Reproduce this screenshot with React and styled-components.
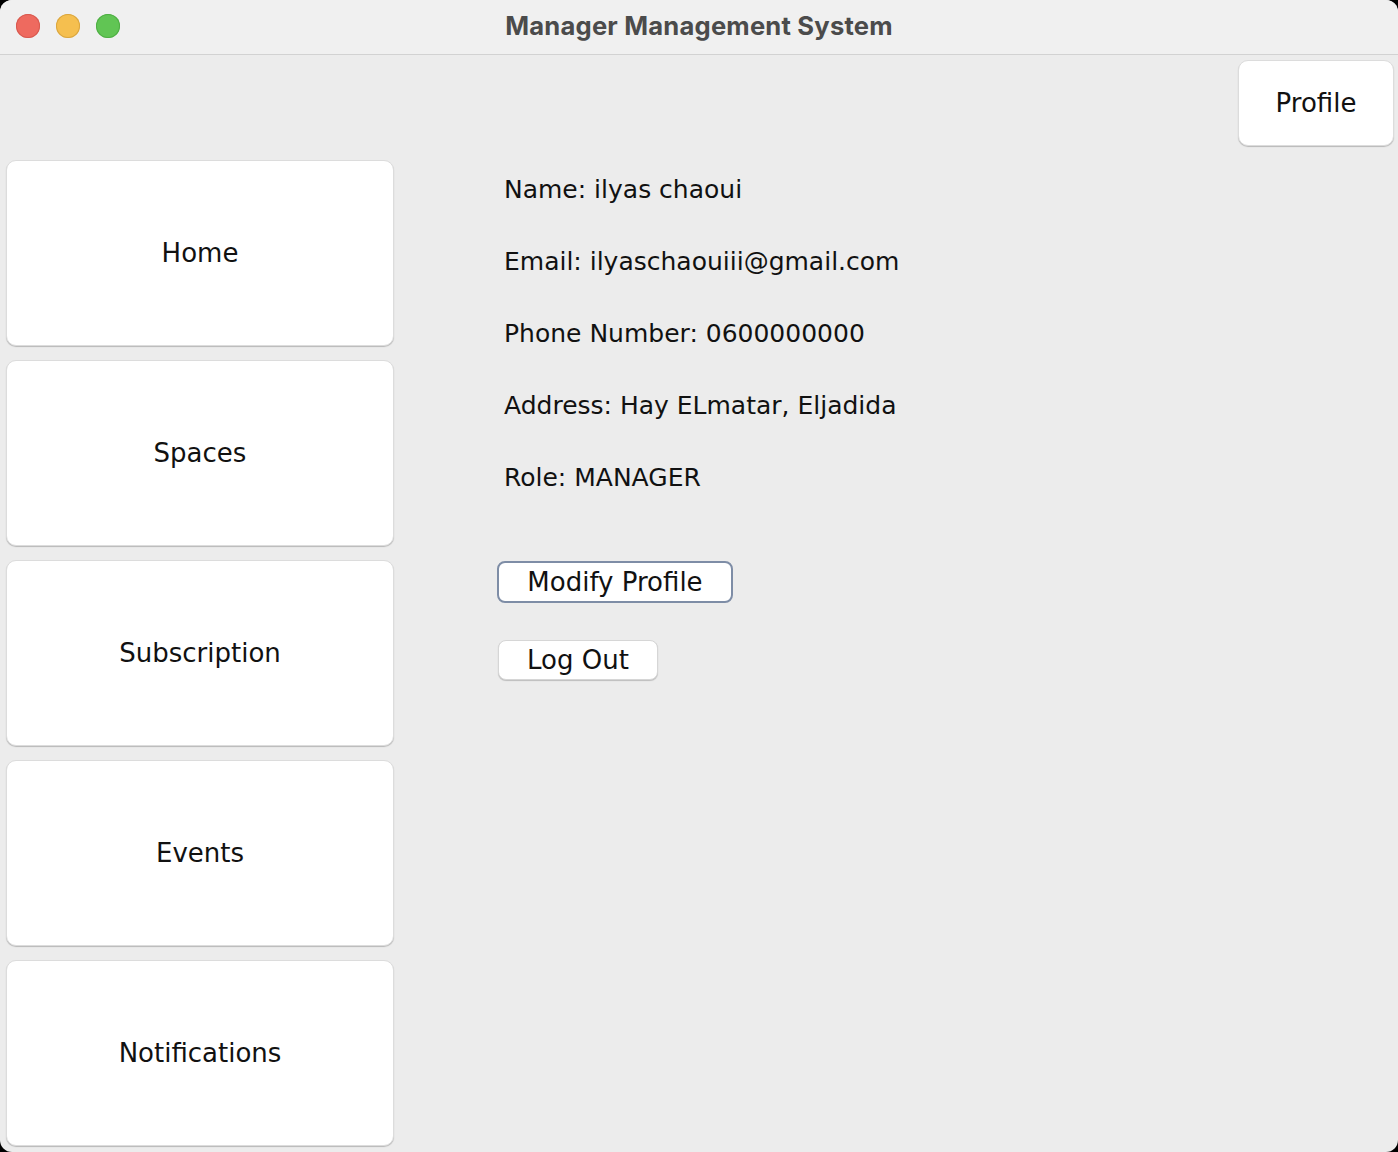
import styled, { createGlobalStyle } from 'styled-components';

const GlobalStyle = createGlobalStyle`
  html, body {
    margin: 0;
    padding: 0;
    background: #000;
  }
  #root {
    width: 1398px;
    height: 1152px;
  }
`;

const Window = styled.div`
  width: 1398px;
  height: 1152px;
  border-radius: 12px;
  overflow: hidden;
  background: #ececec;
  display: flex;
  flex-direction: column;
  font-family: "DejaVu Sans", "Open Sans", sans-serif;
  color: #111;
`;

const TitleBar = styled.div`
  height: 55px;
  flex-shrink: 0;
  background: #f0f0f0;
  border-bottom: 1px solid #d2d2d2;
  display: grid;
  grid-template-columns: 1fr auto 1fr;
  align-items: center;
  padding: 0 16px 4px;
  box-sizing: border-box;
`;

const Lights = styled.div`
  display: flex;
  gap: 16px;
  margin-top: 2px;
`;

const Light = styled.span`
  width: 24px;
  height: 24px;
  border-radius: 50%;
  background: ${(p) => p.$color};
  box-shadow: inset 0 0 0 1px ${(p) => p.$edge};
`;

const Title = styled.div`
  font-family: Inter, "Liberation Sans", sans-serif;
  font-weight: 700;
  font-size: 25.6px;
  color: #4b4b4b;
  letter-spacing: 0.2px;
`;

const Body = styled.div`
  flex: 1;
  display: flex;
  flex-direction: column;
  gap: 14px;
  padding: 5px 4px 0 6px;
`;

const TopRow = styled.div`
  display: flex;
  justify-content: flex-end;
`;

const Card = styled.button`
  font-family: inherit;
  color: #111;
  background: #fff;
  border: 1px solid #dcdcdc;
  border-radius: 10px;
  box-shadow: 0 1px 1px rgba(0, 0, 0, 0.22);
  font-size: 26px;
  padding: 0;
  cursor: pointer;
  display: flex;
  align-items: center;
  justify-content: center;
`;

const ProfileButton = styled(Card)`
  width: 156px;
  height: 86px;
`;

const MainRow = styled.div`
  display: flex;
`;

const Sidebar = styled.nav`
  width: 388px;
  display: flex;
  flex-direction: column;
  gap: 14px;
`;

const NavButton = styled(Card)`
  height: 186px;
`;

const Details = styled.section`
  margin-left: 110px;
  padding-top: 15px;
  display: flex;
  flex-direction: column;
  align-items: flex-start;
`;

const InfoLine = styled.div`
  font-size: 25px;
  line-height: 30px;
  height: 30px;
  margin-bottom: 42px;
  white-space: nowrap;
`;

const ActionButton = styled.button`
  font-family: inherit;
  font-size: 26px;
  color: #111;
  background: #fff;
  cursor: pointer;
  display: flex;
  align-items: center;
  justify-content: center;
  padding: 0;
  width: ${(p) => p.$w}px;
  height: ${(p) => p.$h}px;
  margin-left: ${(p) => p.$x}px;
  border-radius: 8px;
  border: ${(p) => (p.$focused ? '2px solid #7e8da6' : '1px solid #d6d6d6')};
  box-shadow: ${(p) => (p.$focused ? 'none' : '0 1px 1px rgba(0,0,0,0.2)')};
`;

const info = [
  'Name: ilyas chaoui',
  'Email: ilyaschaouiii@gmail.com',
  'Phone Number: 0600000000',
  'Address: Hay ELmatar, Eljadida',
  'Role: MANAGER',
];

const navItems = ['Home', 'Spaces', 'Subscription', 'Events', 'Notifications'];

export default function App() {
  return (
    <>
      <GlobalStyle />
      <Window>
        <TitleBar>
          <Lights>
            <Light $color="#ee6a5f" $edge="#d75a50" />
            <Light $color="#f5bf4f" $edge="#d9a640" />
            <Light $color="#61c554" $edge="#4fae44" />
          </Lights>
          <Title>Manager Management System</Title>
          <span />
        </TitleBar>
        <Body>
          <TopRow>
            <ProfileButton>Profile</ProfileButton>
          </TopRow>
          <MainRow>
            <Sidebar>
              {navItems.map((n) => (
                <NavButton key={n}>{n}</NavButton>
              ))}
            </Sidebar>
            <Details>
              {info.map((line) => (
                <InfoLine key={line}>{line}</InfoLine>
              ))}
              <ActionButton $focused $w={236} $h={42} $x={-7} style={{ marginTop: 26 }}>
                Modify Profile
              </ActionButton>
              <ActionButton $w={160} $h={40} $x={-6} style={{ marginTop: 37 }}>
                Log Out
              </ActionButton>
            </Details>
          </MainRow>
        </Body>
      </Window>
    </>
  );
}
